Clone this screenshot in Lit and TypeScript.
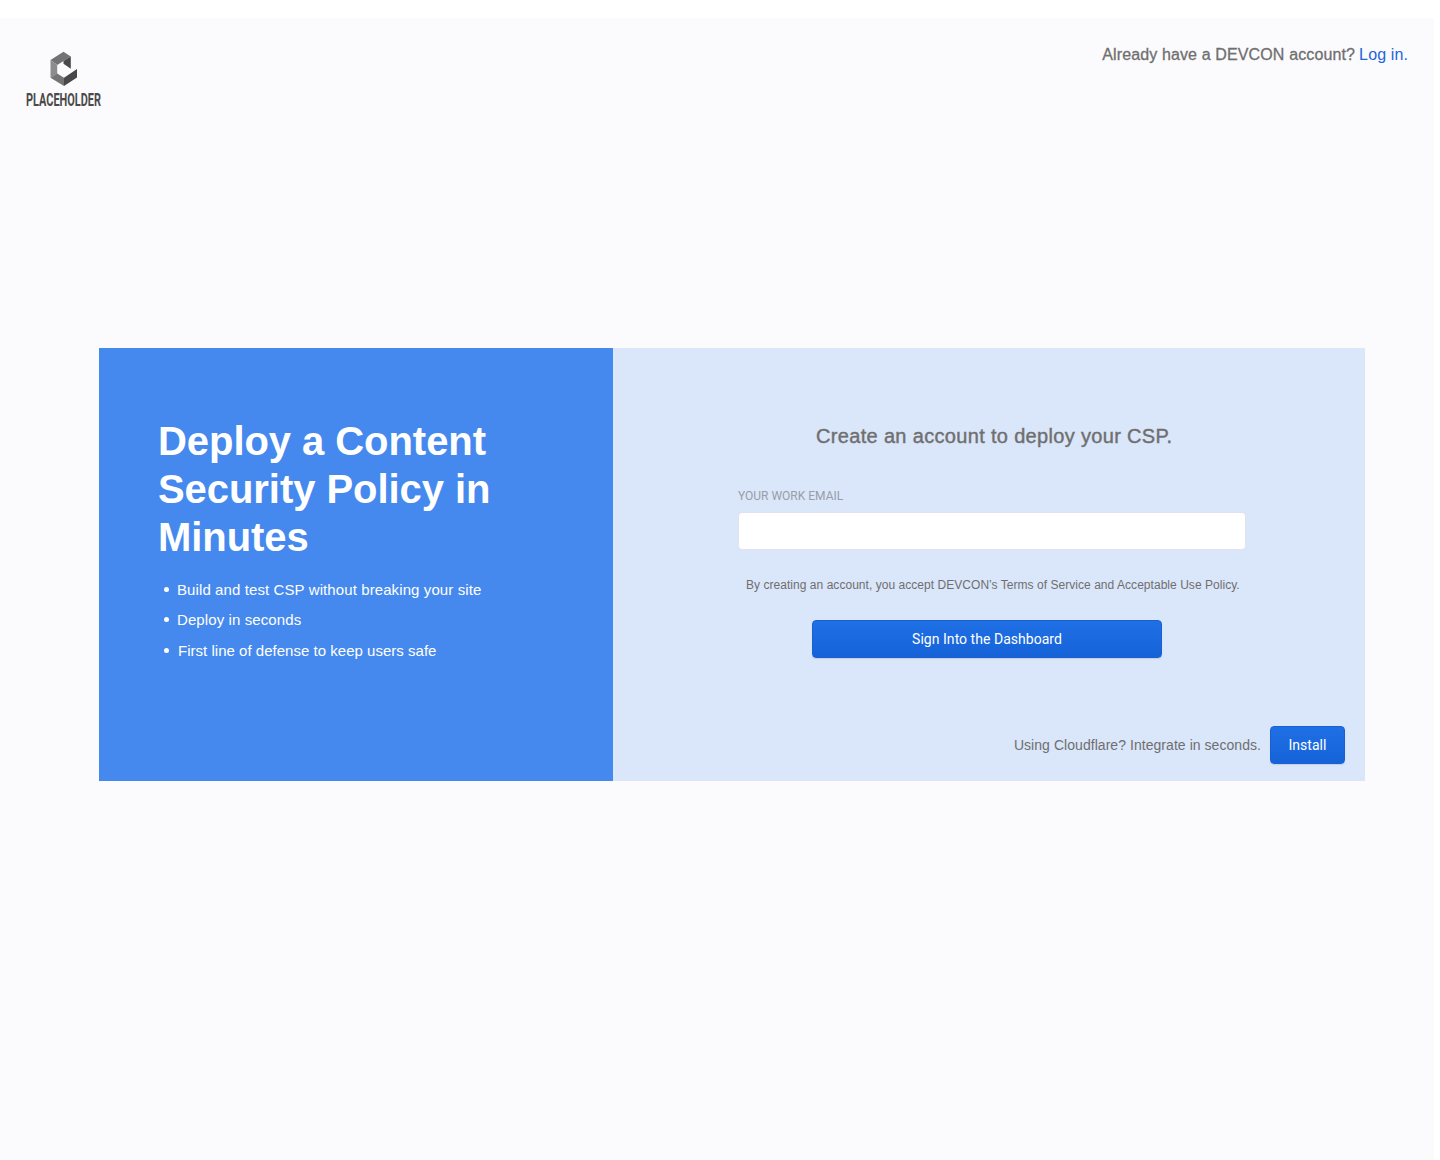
import { LitElement, html, css } from "lit";
import { customElement } from "lit/decorators.js";

@customElement("app-root")
export class AppRoot extends LitElement {
  static styles = css`
    :host {
      display: block;
      box-sizing: border-box;
      width: 1440px;
      height: 1160px;
      padding-top: 18px;
      overflow: hidden;
      background: #fff;
      font-family: "Liberation Sans", Arial, sans-serif;
      color: #6f6f6f;
    }
    * {
      box-sizing: border-box;
    }
    .page {
      width: 1434px;
      height: 1142px;
      background: #fbfbfd;
      display: flex;
      flex-direction: column;
    }
    .header {
      height: 330px;
      display: flex;
      justify-content: space-between;
      align-items: flex-start;
      padding: 28px 26px 0 26px;
    }
    .logo {
      display: block;
      margin-top: 4px;
      overflow: visible;
    }
    .logo-text {
      font: 700 17.5px Roboto, sans-serif;
      fill: #4a4a4a;
    }
    .account {
      font-size: 16px;
      line-height: 18px;
      white-space: nowrap;
      display: flex;
      gap: 4px;
    }
    .account span {
      letter-spacing: 0.13px;
      -webkit-text-stroke: 0.3px currentColor;
    }
    .account a {
      letter-spacing: 0.12px;
      color: #1c66dd;
    }
    .card {
      display: flex;
      width: 1266px;
      height: 433px;
      margin-left: 99px;
    }
    .pitch {
      width: 514px;
      background: #4589ee;
      color: #fff;
      padding: 69px 0 0 59px;
    }
    h1 {
      margin: 0;
      font-size: 40px;
      line-height: 48px;
      font-weight: 700;
      letter-spacing: -0.06px;
      width: 380px;
    }
    .points {
      list-style: none;
      margin: 13px 0 0;
      padding: 0 0 0 6px;
    }
    .points li {
      display: flex;
      align-items: center;
      gap: 8px;
      height: 30px;
      font-size: 15px;
      letter-spacing: 0.1px;
      white-space: nowrap;
    }
    .points li:last-child {
      gap: 9px;
      height: 32px;
      letter-spacing: 0.02px;
    }
    .dot {
      width: 5px;
      height: 5px;
      border-radius: 50%;
      background: #fff;
    }
    .signup {
      width: 752px;
      background: #dae6fa;
      display: flex;
      flex-direction: column;
      align-items: flex-start;
      padding: 76px 20px 0 125px;
    }
    h2 {
      margin: 0;
      padding-left: 78px;
      font-size: 20px;
      line-height: 24px;
      font-weight: 400;
      letter-spacing: 0.33px;
      -webkit-text-stroke: 0.4px currentColor;
      white-space: nowrap;
    }
    label {
      margin-top: 41px;
      font: 12px/14px Roboto, sans-serif;
      color: #989da6;
    }
    input {
      margin-top: 9px;
      width: 508px;
      height: 38px;
      border: 1px solid #dfe3eb;
      border-radius: 4px;
      background: #fff;
      outline: none;
      padding: 0 12px;
    }
    .terms {
      margin: 28px 0 0 8px;
      font-size: 12px;
      line-height: 14px;
      letter-spacing: 0.04px;
      white-space: nowrap;
    }
    button {
      height: 38px;
      border: 1px solid #1860d3;
      border-radius: 4px;
      background: linear-gradient(#1f6fe5, #1663d8);
      color: #fff;
      font: 14px Roboto, sans-serif;
      letter-spacing: 0.03px;
      padding: 0;
      box-shadow: 0 1px 1px rgba(22, 29, 37, 0.12);
    }
    .primary {
      width: 350px;
      margin: 28px 0 0 74px;
    }
    .integrate {
      align-self: flex-end;
      display: flex;
      align-items: center;
      gap: 9px;
      margin-top: 68px;
      font-size: 14px;
      letter-spacing: 0.05px;
      white-space: nowrap;
    }
    .install {
      width: 75px;
    }
  `;

  private points = [
    "Build and test CSP without breaking your site",
    "Deploy in seconds",
    "First line of defense to keep users safe",
  ];

  render() {
    return html`
      <div class="page">
        <header class="header">
          <svg class="logo" width="80" height="60" viewBox="26 50 80 60">
            <path d="M50.5 60 63.5 51.8 70.8 56.4 57.2 65Z" fill="#737373" />
            <path d="M50.5 60 57.2 65V73.8L50.5 77.8Z" fill="#8c8c8c" />
            <path d="M50.5 77.8 57.2 73.6 64 77.8V86Z" fill="#747474" />
            <path d="M64 77.8 77 69V77.4L64 86Z" fill="#484848" />
            <path d="M70.8 56.4V68.8L63.5 63.8V61Z" fill="#484848" />
            <text class="logo-text" x="26" y="106" textLength="75" lengthAdjust="spacingAndGlyphs">PLACEHOLDER</text>
          </svg>
          <div class="account"><span>Already have a DEVCON account?</span><a>Log in.</a></div>
        </header>
        <main class="card">
          <section class="pitch">
            <h1>Deploy a Content Security Policy in Minutes</h1>
            <ul class="points">
              ${this.points.map((p) => html`<li><i class="dot"></i>${p}</li>`)}
            </ul>
          </section>
          <section class="signup">
            <h2>Create an account to deploy your CSP.</h2>
            <label for="email">YOUR WORK EMAIL</label>
            <input id="email" type="email" />
            <p class="terms">By creating an account, you accept DEVCON’s Terms of Service and Acceptable Use Policy.</p>
            <button class="primary">Sign Into the Dashboard</button>
            <div class="integrate">
              <span>Using Cloudflare? Integrate in seconds.</span>
              <button class="install">Install</button>
            </div>
          </section>
        </main>
      </div>
    `;
  }
}
